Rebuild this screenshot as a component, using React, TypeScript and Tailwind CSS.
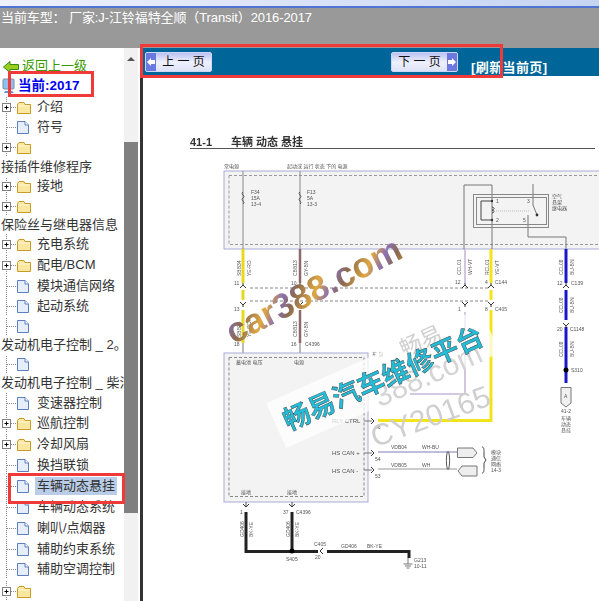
const cjk = "font-['Liberation_Sans','Noto_Sans_CJK_SC',sans-serif]";

type Row =
  | { y: number; kind: "plus" | "doc"; label?: string; selected?: boolean }
  | { y: number; kind: "head"; label: string };

// y is the centre of the row on the page, the row height is worked out from it
const rows: Row[] = [
  { y: 106, kind: "plus", label: "介绍" },
  { y: 127, kind: "doc", label: "符号" },
  { y: 146, kind: "plus" },
  { y: 166, kind: "head", label: "接插件维修程序" },
  { y: 186, kind: "plus", label: "接地" },
  { y: 205, kind: "plus" },
  { y: 224, kind: "head", label: "保险丝与继电器信息" },
  { y: 243, kind: "plus", label: "充电系统" },
  { y: 264, kind: "plus", label: "配电/BCM" },
  { y: 285, kind: "doc", label: "模块通信网络" },
  { y: 306, kind: "doc", label: "起动系统" },
  { y: 326, kind: "doc" },
  { y: 345, kind: "head", label: "发动机电子控制 _ 2。" },
  { y: 363, kind: "doc" },
  { y: 382, kind: "head", label: "发动机电子控制 _ 柴油" },
  { y: 402, kind: "doc", label: "变速器控制" },
  { y: 422, kind: "plus", label: "巡航控制" },
  { y: 444, kind: "plus", label: "冷却风扇" },
  { y: 464, kind: "doc", label: "换挡联锁" },
  { y: 485, kind: "doc", label: "车辆动态悬挂", selected: true },
  { y: 507, kind: "doc", label: "车辆动态系统" },
  { y: 527, kind: "doc", label: "喇叭/点烟器" },
  { y: 548, kind: "doc", label: "辅助约束系统" },
  { y: 569, kind: "doc", label: "辅助空调控制" },
  { y: 589, kind: "plus" },
];

function TreeIcon({ kind }: { kind: "plus" | "doc" }) {
  return (
    <svg width="32" height="20" viewBox="0 0 32 20" className="shrink-0">
      <path d="M6.5 0V20" stroke="#888" strokeDasharray="1 1" fill="none" />
      <path d="M7 10.5H17" stroke="#888" strokeDasharray="1 1" fill="none" />
      {kind === "plus" ? (
        <>
          <rect x="2.5" y="6.5" width="8" height="8" fill="#fff" stroke="#808080" />
          <path d="M4.5 10.5H8.5M6.5 8.5V12.5" stroke="#000" />
          <path d="M17.5 7.5L19 5.5H24L25 7.5H30.5V16.5H17.5Z" fill="#fbe7a0" stroke="#c89a28" />
          <path d="M18 9H30" stroke="#fff7d8" />
        </>
      ) : (
        <>
          <path d="M17.5 4.5H25L28.5 8V16.5H17.5Z" fill="#e6eefb" stroke="#5b7fc0" />
          <path d="M25 4.5V8H28.5" fill="#fff" stroke="#5b7fc0" />
        </>
      )}
    </svg>
  );
}

function Sidebar() {
  return (
    <div className={`w-[124px] shrink-0 overflow-hidden bg-white text-[13px] leading-[18px] text-[#333] ${cjk}`}>
      <div className="flex h-[27px] items-end pl-[3px]">
        <svg width="16" height="12" viewBox="0 0 16 12" className="mb-[2px] shrink-0">
          <path d="M0.5 6L7 0.5V3.5H15.5V8.5H7V11.5Z" fill="#9ccc20" stroke="#2f8f10" />
        </svg>
        <span className="ml-[3px] whitespace-nowrap text-[#3a9a00] underline">返回上一级</span>
      </div>
      <div className="flex h-[21px] items-center pl-[2px]">
        <svg width="13" height="16" viewBox="0 0 13 16" className="shrink-0">
          <rect x="1" y="1" width="11" height="10" rx="1" fill="#8fc0f0" stroke="#7c8ea8" />
          <path d="M3 13H10L12 15H2Z" fill="#5f94d8" />
        </svg>
        <span className="ml-[3px] whitespace-nowrap text-[13.5px] font-bold text-[#0000f0]">当前:2017</span>
      </div>
      {rows.map((r, i) => {
        const prev = i === 0 ? 95.5 : (rows[i - 1].y + r.y) / 2;
        const next = i === rows.length - 1 ? 601 : (rows[i + 1].y + r.y) / 2;
        return (
          <div key={r.y} className="flex items-center overflow-hidden" style={{ height: next - prev }}>
            {r.kind === "head" ? (
              <span className="pl-[1px] whitespace-nowrap">{r.label}</span>
            ) : (
              <>
                <TreeIcon kind={r.kind} />
                {r.label && (
                  <span className={`ml-[3px] whitespace-nowrap px-[2px] ${r.selected ? "bg-[#b9cde8]" : ""}`}>
                    {r.label}
                  </span>
                )}
              </>
            )}
          </div>
        );
      })}
    </div>
  );
}

function PageButton({ label, dir }: { label: string; dir: "prev" | "next" }) {
  const arrow = (
    <span className="flex h-full w-[10px] items-center justify-center bg-[#6a78e0]">
      <svg width="8" height="8" viewBox="0 0 8 8">
        <path d={dir === "prev" ? "M0 4L4 0V2H8V6H4V8Z" : "M8 4L4 0V2H0V6H4V8Z"} fill="#fff" />
      </svg>
    </span>
  );
  return (
    <div className="flex h-[20px] w-[67px] items-center overflow-hidden rounded-[2px] border border-[#cfd6f5] bg-gradient-to-b from-[#b9c2f2] via-[#eef0fc] to-[#dfe3f8]">
      {dir === "prev" && arrow}
      <span className="flex-1 text-center text-[12px] leading-none text-[#111]">{label}</span>
      {dir === "next" && arrow}
    </div>
  );
}

function Lbl({ x, y, t, s = 5, rot }: { x: number; y: number; t: string; s?: number; rot?: boolean }) {
  return (
    <text x={x} y={y} fontSize={s} fill="#555" transform={rot ? `rotate(-90 ${x} ${y})` : undefined}>
      {t}
    </text>
  );
}

// little pair of chevrons for an inline connector
function Conn({ x, y, down }: { x: number; y: number; down?: boolean }) {
  const d = down ? `M${x - 3} ${y - 2}L${x} ${y + 1}L${x + 3} ${y - 2}M${x} ${y + 1}V${y + 3}` : `M${x - 3} ${y + 2}L${x} ${y - 1}L${x + 3} ${y + 2}M${x} ${y - 1}V${y - 3}`;
  return <path d={d} stroke="#333" fill="none" strokeWidth="1" />;
}

function Diagram() {
  return (
    <svg viewBox="143 76 456 525" className={`block h-[525px] w-[456px] blur-[0.45px] ${cjk}`}>
      <defs>
        <linearGradient id="wm" gradientUnits="userSpaceOnUse" x1="220" y1="0" x2="250" y2="30" spreadMethod="repeat">
          <stop offset="0" stopColor="#8a6a50" />
          <stop offset="0.45" stopColor="#e0a840" />
          <stop offset="0.75" stopColor="#8a70b0" />
          <stop offset="1" stopColor="#8a6a50" />
        </linearGradient>
      </defs>

      {/* title */}
      <text x="190" y="146" fontSize="11" fontWeight="700" fill="#333">41-1</text>
      <text x="231" y="146" fontSize="11" fontWeight="700" fill="#333">车辆 动态 悬挂</text>
      <path d="M190 148.5H595" stroke="#555" />

      {/* top box */}
      <Lbl x={224} y={168} t="常电源" />
      <Lbl x={287} y={168} t="起动或 运行 状态 下的 电源" />
      <rect x="224" y="171" width="380" height="78" fill="#f3f3f3" stroke="#aaaad8" />
      <rect x="229" y="175.5" width="375" height="69" fill="none" stroke="#999" strokeDasharray="3 2" />
      <path d="M243 171V249M300 171V249" stroke="#888" />
      <path d="M243 192c-3 2 3 4 0 6s3 4 0 6M300 192c-3 2 3 4 0 6s3 4 0 6" stroke="#444" fill="#f3f3f3" />
      <Lbl x={251} y={194} t="F34" />
      <Lbl x={251} y={200} t="15A" />
      <Lbl x={251} y={206} t="13-4" />
      <Lbl x={307} y={194} t="F13" />
      <Lbl x={307} y={200} t="5A" />
      <Lbl x={307} y={206} t="13-3" />

      {/* relay */}
      <path d="M464 249V185H492V249M533 184V205L537 215M528 215V237H566V249" stroke="#777" fill="none" />
      <rect x="473.5" y="194.5" width="75" height="33" fill="none" stroke="#888" />
      <rect x="476.5" y="197.5" width="70" height="27" fill="none" stroke="#888" />
      <path d="M492 201H481V220H492" stroke="#444" fill="none" />
      <path d="M492 207c3 1 3 2 0 3c3 1 3 2 0 3" stroke="#444" fill="none" />
      <path d="M494 211H530" stroke="#bbb" strokeDasharray="1 1" />
      <circle cx="492" cy="201" r="1.2" fill="#333" />
      <circle cx="492" cy="220" r="1.2" fill="#333" />
      <circle cx="537" cy="215" r="1.4" fill="#333" />
      <Lbl x={496} y={203} t="1" />
      <Lbl x={496} y={222} t="2" />
      <Lbl x={527} y={203} t="3" />
      <Lbl x={523} y={222} t="5" />
      <Lbl x={552} y={198} t="空气" />
      <Lbl x={552} y={204} t="悬架" />
      <Lbl x={552} y={210} t="继电器" />

      {/* dashed separators */}
      <path d="M250 288H488M250 301H488" stroke="#888" strokeDasharray="3 2" />

      {/* wires */}
      <path d="M243 249V283M243 290V300M243 310V343" stroke="#e8d820" strokeWidth="3" />
      <path d="M300 249V283M300 310V343" stroke="#8a6a6a" strokeWidth="2.5" />
      <path d="M465 249V283M465 312V394H410" stroke="#c8b8d8" strokeWidth="1.6" fill="none" />
      <path d="M491 249V283M491 290V300M491 310V420.5H378" stroke="#f2e41c" strokeWidth="3" fill="none" />
      <path d="M566 249V283M566 290V320M566 327V383" stroke="#1818c8" strokeWidth="3" />
      <Conn x={243} y={286} />
      <Conn x={300} y={286} />
      <Conn x={465} y={286} />
      <Conn x={491} y={286} />
      <Conn x={566} y={286} />
      <Conn x={243} y={304} down />
      <Conn x={300} y={304} down />
      <Conn x={465} y={304} down />
      <Conn x={491} y={304} down />
      <Conn x={566} y={325} down />
      <path d="M243 343V353M300 343V353" stroke="#777" />
      <circle cx="566" cy="370" r="2.5" fill="#000" />

      <Lbl x={241} y={276} t="SBB34" rot />
      <Lbl x={251} y={276} t="YE-RD" rot />
      <Lbl x={297} y={276} t="CBB13" rot />
      <Lbl x={308} y={276} t="GY-BN" rot />
      <Lbl x={241} y={337} t="SBB34" rot />
      <Lbl x={251} y={337} t="YE-RD" rot />
      <Lbl x={297} y={337} t="CBB13" rot />
      <Lbl x={308} y={337} t="GY-BN" rot />
      <Lbl x={461} y={275} t="CCL01" rot />
      <Lbl x={472} y={275} t="WH-VT" rot />
      <Lbl x={489} y={275} t="RCL01" rot />
      <Lbl x={499} y={275} t="YE-VT" rot />
      <Lbl x={563} y={275} t="CCL08" rot />
      <Lbl x={574} y={275} t="BU-BN" rot />
      <Lbl x={563} y={313} t="CCL08" rot />
      <Lbl x={574} y={313} t="BU-BN" rot />
      <Lbl x={563} y={357} t="CCL08" rot />
      <Lbl x={574} y={357} t="BU-BN" rot />
      <Lbl x={234} y={285} t="11" />
      <Lbl x={234} y={311} t="13" />
      <Lbl x={234} y={346} t="18" />
      <Lbl x={291} y={285} t="10" />
      <Lbl x={291} y={346} t="16" />
      <Lbl x={305} y={346} t="C4396" />
      <Lbl x={455} y={284} t="12" />
      <Lbl x={458} y={311} t="1" />
      <Lbl x={485} y={284} t="4" />
      <Lbl x={485} y={311} t="8" />
      <Lbl x={495} y={284} t="C144" />
      <Lbl x={495} y={311} t="C405" />
      <Lbl x={557} y={285} t="12" />
      <Lbl x={571} y={285} t="C139" />
      <Lbl x={557} y={331} t="20" />
      <Lbl x={570} y={331} t="C1148" />
      <Lbl x={571} y={372} t="S310" />

      {/* A connector */}
      <path d="M561 387.5H571V403L566 407L561 403Z" fill="#f0f0f0" stroke="#777" />
      <Lbl x={564} y={398} t="A" />
      <Lbl x={561} y={413} t="41-2" />
      <Lbl x={561} y={420} t="车辆" />
      <Lbl x={561} y={426} t="动态" />
      <Lbl x={561} y={432} t="悬挂" />

      {/* module box */}
      <rect x="224" y="353" width="144" height="149" fill="#f3f3f3" stroke="#aaaad8" />
      <rect x="229" y="357.5" width="135" height="139" fill="none" stroke="#888" strokeDasharray="3 2" />
      <Lbl x={236} y={364} t="蓄电池 电压" />
      <Lbl x={294} y={364} t="电源" />
      <text x="332" y="423" fontSize="6" fill="#555">RLY CTRL</text>
      <text x="332" y="455" fontSize="6" fill="#555">HS CAN +</text>
      <text x="332" y="473" fontSize="6" fill="#555">HS CAN -</text>
      <Lbl x={241} y={494} t="接地" />
      <Lbl x={287} y={494} t="接地" />
      <path d="M364 421H372M364 453H372M364 470H372" stroke="#777" />
      <path d="M371 418L374 421L371 424M371 450L374 453L371 456M371 467L374 470L371 473" stroke="#333" fill="none" />
      <Lbl x={375} y={429} t="46" />
      <Lbl x={375} y={461} t="54" />
      <Lbl x={375} y={478} t="53" />

      {/* CAN pair */}
      <path d="M378 452H457" stroke="#a8a8d0" strokeWidth="1.5" />
      <path d="M378 469H457" stroke="#999" />
      <ellipse cx="448" cy="460.5" rx="1.6" ry="9" fill="none" stroke="#555" />
      <path d="M457.5 448H473L477 453L473 457.5H457.5Z" fill="#eee" stroke="#777" />
      <path d="M477 466H462L458 471L462 476H477Z" fill="#eee" stroke="#777" />
      <path d="M482 447c2 0 2 2 2 6v4l2 3l-2 3v4c0 4 0 6-2 6" fill="none" stroke="#444" />
      <Lbl x={391} y={449} t="VDB04" />
      <Lbl x={422} y={449} t="WH-BU" />
      <Lbl x={391} y={467} t="VDB05" />
      <Lbl x={422} y={467} t="WH" />
      <Lbl x={491} y={454} t="模块" />
      <Lbl x={491} y={460} t="通信" />
      <Lbl x={491} y={466} t="网络" />
      <Lbl x={491} y={472} t="14-3" />

      {/* ground wires */}
      <path d="M246 502V506M292 502V506" stroke="#555" />
      <path d="M243 504L246 507L249 504M289 504L292 507L295 504" stroke="#333" fill="none" />
      <path d="M246 512V551.5H318M292 512V551.5M327 551.5H409V558" stroke="#222" strokeWidth="3" fill="none" />
      <circle cx="292" cy="551" r="2.5" fill="#000" />
      <path d="M323 548L320 551L323 554" stroke="#333" fill="none" />
      <path d="M408 558V564M403.5 564H412.5M405 566H411M406.5 568H409.5" stroke="#777" />
      <Lbl x={240} y={514} t="1" />
      <Lbl x={283} y={514} t="37" />
      <Lbl x={296} y={514} t="C4396" />
      <Lbl x={244} y={537} t="GD406" rot />
      <Lbl x={253} y={537} t="BK-YE" rot />
      <Lbl x={290} y={537} t="GD406" rot />
      <Lbl x={299} y={537} t="BK-YE" rot />
      <Lbl x={314} y={546} t="C405" />
      <Lbl x={315} y={559} t="20" />
      <Lbl x={341} y={548} t="GD406" />
      <Lbl x={367} y={548} t="BK-YE" />
      <Lbl x={286} y={561} t="S405" />
      <Lbl x={414} y={562} t="G213" />
      <Lbl x={414} y={568} t="10-11" />
      <Lbl x={372} y={356} t="车 身" />

      {/* watermarks */}
      <rect x="-117" y="-24.5" width="234" height="49" fill="#fff" fillOpacity="0.72" transform="translate(383 378) rotate(-24)" />
      <text x="424" y="348" fontSize="22" fill="#cfcfcf" transform="rotate(-24 424 348)" textAnchor="middle">畅易</text>
      <text x="432" y="384" fontSize="30" fill="#d4d4d4" transform="rotate(-24 432 384)" textAnchor="middle">388.com</text>
      <text x="434" y="426" fontSize="30" fill="#cfcfcf" transform="rotate(-20 434 426)" textAnchor="middle">CY20165</text>
      <text x="383" y="388" fontSize="27" fontWeight="700" fill="#25bcd8" stroke="#333" strokeWidth="0.4" transform="rotate(-24 383 378)" textAnchor="middle">畅易汽车维修平台</text>
      <text x="314" y="302" fontSize="35" fontWeight="700" fill="url(#wm)" transform="rotate(-27 314 291)" textAnchor="middle" className="font-['Liberation_Sans',sans-serif]">car388.com</text>
    </svg>
  );
}

export default function App() {
  return (
    <div className={`relative flex h-[601px] w-[599px] flex-col overflow-hidden bg-white ${cjk}`}>
      <div className="h-[6px] bg-gradient-to-r from-[#eef1fa] to-[#c6d4f2]" />
      <div className="h-[2px] bg-[#4f74d2]" />
      <div className="flex h-[40px] items-start bg-[#999] pt-[1px] pl-[1px] text-[13px] leading-[18px] tracking-[-0.1px] whitespace-nowrap text-white">
        当前车型： 厂家:J-江铃福特全顺（Transit）2016-2017
      </div>

      <div className="flex min-h-0 flex-1">
        <Sidebar />

        {/* scrollbar */}
        <div className="flex w-[14px] shrink-0 flex-col bg-[#f1f1f1]">
          <div className="flex h-[17px] items-end justify-center">
            <div className="mb-[4px] h-0 w-0 border-x-[4px] border-b-[4px] border-x-transparent border-b-[#555]" />
          </div>
          <div className="mt-[77px] h-[371px] bg-[#808080]" />
        </div>
        <div className="w-[2px] shrink-0 bg-white" />
        <div className="w-[3px] shrink-0 bg-[#333]" />

        <div className="flex min-w-0 flex-1 flex-col">
          <div className="flex h-[28px] shrink-0 items-center bg-[#006699] pl-[2px]">
            <PageButton label="上 一 页" dir="prev" />
            <div className="ml-[179px]">
              <PageButton label="下 一 页" dir="next" />
            </div>
            <span className="mt-[11px] ml-[13px] text-[13px] leading-[16px] font-bold tracking-[0.4px] whitespace-nowrap text-white">
              [刷新当前页]
            </span>
          </div>
          <Diagram />
        </div>
      </div>

      {/* red callouts drawn over the screenshot */}
      <div className="absolute top-[44px] left-[140px] h-[34px] w-[363px] border-[3px] border-[#f03a3a]" />
      <div className="absolute top-[71px] left-[8px] h-[26px] w-[86px] border-[3px] border-[#f03a3a]" />
      <div className="absolute top-[473px] left-[8px] h-[31px] w-[117px] border-[3px] border-[#f03a3a]" />
    </div>
  );
}
